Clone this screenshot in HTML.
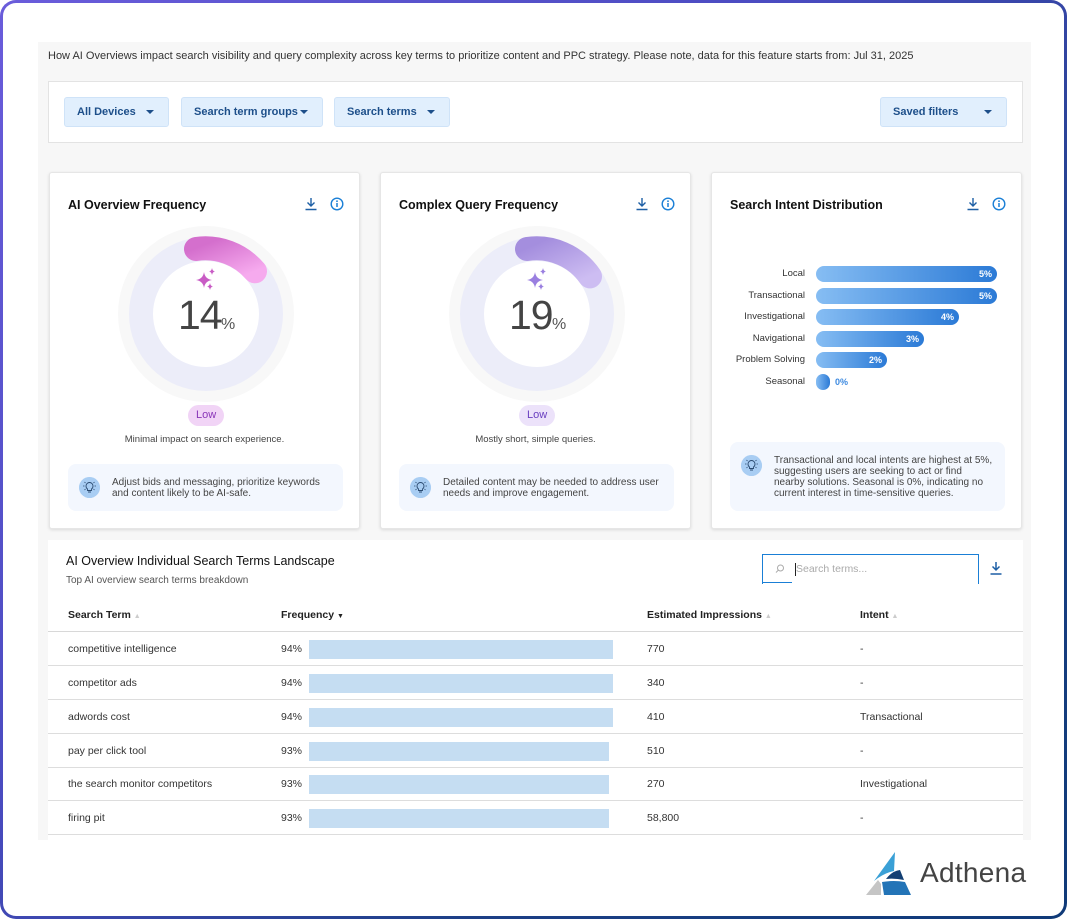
<!DOCTYPE html>
<html><head><meta charset="utf-8"><style>
*{box-sizing:border-box;margin:0;padding:0}
body{width:1067px;height:919px;background:#fff;font-family:"Liberation Sans",sans-serif;color:#333;position:relative;overflow:hidden}
.frame{position:absolute;left:0;top:0;width:1067px;height:919px;border-radius:16px;border:3px solid transparent;background:linear-gradient(#fff,#fff) padding-box,linear-gradient(135deg,#6a5cdb 0%,#4a4bc0 40%,#1c3f86 70%,#0f3a78 100%) border-box}
.abs{position:absolute}
.panel{left:38px;top:42px;width:993px;height:798px;background:#f7f7f7}
.desc{left:48px;top:50px;font-size:11px;color:#333}
.filters{left:48px;top:81px;width:975px;height:62px;background:#fff;border:1px solid #e3e3e3}
.btn{position:absolute;top:15px;height:30px;background:#e1effd;border:1px solid #cfe3f8;border-radius:3px;color:#1d4f8a;font-size:11px;font-weight:bold;line-height:28px;padding-left:12px}
.btn:after{content:"";position:absolute;right:14px;top:12px;border-left:4px solid transparent;border-right:4px solid transparent;border-top:4px solid #1d4f8a}
.card{position:absolute;top:172px;width:311px;height:357px;background:#fff;border:1px solid #e6e6e6;border-radius:3px;box-shadow:0 1px 3px rgba(0,0,0,.12)}
.card h3{position:absolute;left:18px;top:25px;font-size:12.5px;color:#111}
.ic{position:absolute;top:24px}
.pill{position:absolute;top:232px;height:21px;line-height:21px;border-radius:11px;font-size:11px;padding:0 8px}
.sub{position:absolute;top:261px;width:100%;text-align:center;font-size:9.5px;color:#444}
.tip{position:absolute;left:18px;width:275px;background:#f3f7fe;border-radius:8px;font-size:10px;color:#444;line-height:11px}
.bulb{position:absolute;left:11px;width:21px;height:21px;border-radius:50%;background:#a8cdf3}
.tbl{left:48px;top:540px;width:975px;height:300px;background:#fff}
.row{position:absolute;left:48px;width:975px;height:34px;border-bottom:1px solid #ddd;font-size:10.5px;color:#333}
.row span{position:absolute;top:11px}
.bar{position:absolute;top:8px;left:261px;height:19px;background:#c5ddf2}
.il{position:absolute;font-size:9.5px;color:#333}
.ib{position:absolute;left:816px;height:16px;border-radius:8px;background:linear-gradient(90deg,#86bdf3,#2b7ad6);color:#fff;font-size:9px;font-weight:bold;text-align:right;padding-right:5px;line-height:16px}
</style></head><body>
<div class="frame"></div>
<div class="abs panel"></div>
<div class="abs desc">How AI Overviews impact search visibility and query complexity across key terms to prioritize content and PPC strategy. Please note, data for this feature starts from: Jul 31, 2025</div>
<div class="abs filters">
<div class="btn" style="left:15px;width:105px">All Devices</div>
<div class="btn" style="left:132px;width:142px">Search term groups</div>
<div class="btn" style="left:285px;width:116px">Search terms</div>
<div class="btn" style="left:831px;width:127px">Saved filters</div>
</div>

<!-- card 1 -->
<div class="card" style="left:49px">
<h3>AI Overview Frequency</h3>
<svg class="ic" style="left:254px" width="14" height="14" viewBox="0 0 14 14"><path d="M7 1v8M3.5 5.5L7 9l3.5-3.5M1.5 12.5h11" stroke="#1d5fa5" stroke-width="1.4" fill="none"/></svg>
<svg class="ic" style="left:280px" width="14" height="14" viewBox="0 0 14 14"><circle cx="7" cy="7" r="5.8" stroke="#1a7fd6" stroke-width="1.4" fill="none"/><path d="M7 6v4" stroke="#1a7fd6" stroke-width="1.5"/><circle cx="7" cy="4.2" r=".9" fill="#1a7fd6"/></svg>
<svg style="position:absolute;left:67px;top:52px" width="178" height="178" viewBox="-89 -89 178 178">
<defs><linearGradient id="g1" x1="0" y1="0" x2="1" y2="1"><stop offset="0" stop-color="#d46fcd"/><stop offset="1" stop-color="#f6aaee"/></linearGradient></defs>
<circle r="88" fill="#f8f8f8"/><circle r="77" fill="#ecedf9"/><circle r="53" fill="#fff"/>
<path d="M-10 -65 A65 65 0 0 1 49 -42.7" stroke="url(#g1)" stroke-width="24" stroke-linecap="round" fill="none"/>
<path d="M-2 -42 Q-1 -35 6 -34 Q-1 -33 -2 -26 Q-3 -33 -10 -34 Q-3 -35 -2 -42Z M6 -46 Q6.5 -43 9 -42.5 Q6.5 -42 6 -39 Q5.5 -42 3 -42.5 Q5.5 -43 6 -46Z M4 -31 Q4.5 -28 7 -27.5 Q4.5 -27 4 -24 Q3.5 -27 1 -27.5 Q3.5 -28 4 -31Z" fill="#c95cc5"/>
<text x="-28" y="15" font-family="Liberation Sans" font-size="41" fill="#444" letter-spacing="-1">14</text><text x="15" y="15" font-family="Liberation Sans" font-size="16" fill="#555">%</text>
</svg>
<div class="pill" style="left:138px;background:#f1d4f6;color:#8a35b8">Low</div>
<div class="sub">Minimal impact on search experience.</div>
<div class="tip" style="top:291px;height:47px;padding:13px 10px 0 44px"><svg class="bulb" style="top:13px" viewBox="0 0 21 21"><circle cx="10.5" cy="10.5" r="10.5" fill="#a8cdf3"/><path d="M8.5 13.5v-1.5Q7 11 7 9a3.5 3.5 0 0 1 7 0q0 2-1.5 3v1.5Z M9 15h3" stroke="#2a4a70" stroke-width=".9" fill="none"/><path d="M4 9h1.5M15.5 9H17M5.5 5l1 1M15.5 5l-1 1M5.5 13l1-1M15.5 13l-1-1" stroke="#2a4a70" stroke-width=".8"/></svg>Adjust bids and messaging, prioritize keywords and content likely to be AI-safe.</div>
</div>

<!-- card 2 -->
<div class="card" style="left:380px">
<h3>Complex Query Frequency</h3>
<svg class="ic" style="left:254px" width="14" height="14" viewBox="0 0 14 14"><path d="M7 1v8M3.5 5.5L7 9l3.5-3.5M1.5 12.5h11" stroke="#1d5fa5" stroke-width="1.4" fill="none"/></svg>
<svg class="ic" style="left:280px" width="14" height="14" viewBox="0 0 14 14"><circle cx="7" cy="7" r="5.8" stroke="#1a7fd6" stroke-width="1.4" fill="none"/><path d="M7 6v4" stroke="#1a7fd6" stroke-width="1.5"/><circle cx="7" cy="4.2" r=".9" fill="#1a7fd6"/></svg>
<svg style="position:absolute;left:67px;top:52px" width="178" height="178" viewBox="-89 -89 178 178">
<defs><linearGradient id="g2" x1="0" y1="0" x2="1" y2="1"><stop offset="0" stop-color="#a48ede"/><stop offset="1" stop-color="#cdbdf2"/></linearGradient></defs>
<circle r="88" fill="#f8f8f8"/><circle r="77" fill="#ecedf9"/><circle r="53" fill="#fff"/>
<path d="M-10 -65 A65 65 0 0 1 53 -37.6" stroke="url(#g2)" stroke-width="24" stroke-linecap="round" fill="none"/>
<path d="M-2 -42 Q-1 -35 6 -34 Q-1 -33 -2 -26 Q-3 -33 -10 -34 Q-3 -35 -2 -42Z M6 -46 Q6.5 -43 9 -42.5 Q6.5 -42 6 -39 Q5.5 -42 3 -42.5 Q5.5 -43 6 -46Z M4 -31 Q4.5 -28 7 -27.5 Q4.5 -27 4 -24 Q3.5 -27 1 -27.5 Q3.5 -28 4 -31Z" fill="#9a7fe0"/>
<text x="-28" y="15" font-family="Liberation Sans" font-size="41" fill="#444" letter-spacing="-1">19</text><text x="15" y="15" font-family="Liberation Sans" font-size="16" fill="#555">%</text>
</svg>
<div class="pill" style="left:138px;background:#ece2fa;color:#6a3fc0">Low</div>
<div class="sub">Mostly short, simple queries.</div>
<div class="tip" style="top:291px;height:47px;padding:13px 10px 0 44px"><svg class="bulb" style="top:13px" viewBox="0 0 21 21"><circle cx="10.5" cy="10.5" r="10.5" fill="#a8cdf3"/><path d="M8.5 13.5v-1.5Q7 11 7 9a3.5 3.5 0 0 1 7 0q0 2-1.5 3v1.5Z M9 15h3" stroke="#2a4a70" stroke-width=".9" fill="none"/><path d="M4 9h1.5M15.5 9H17M5.5 5l1 1M15.5 5l-1 1M5.5 13l1-1M15.5 13l-1-1" stroke="#2a4a70" stroke-width=".8"/></svg>Detailed content may be needed to address user needs and improve engagement.</div>
</div>

<!-- card 3 -->
<div class="card" style="left:711px">
<h3>Search Intent Distribution</h3>
<svg class="ic" style="left:254px" width="14" height="14" viewBox="0 0 14 14"><path d="M7 1v8M3.5 5.5L7 9l3.5-3.5M1.5 12.5h11" stroke="#1d5fa5" stroke-width="1.4" fill="none"/></svg>
<svg class="ic" style="left:280px" width="14" height="14" viewBox="0 0 14 14"><circle cx="7" cy="7" r="5.8" stroke="#1a7fd6" stroke-width="1.4" fill="none"/><path d="M7 6v4" stroke="#1a7fd6" stroke-width="1.5"/><circle cx="7" cy="4.2" r=".9" fill="#1a7fd6"/></svg>
<div class="tip" style="top:269px;height:69px;padding:13px 10px 0 44px"><svg class="bulb" style="top:13px" viewBox="0 0 21 21"><circle cx="10.5" cy="10.5" r="10.5" fill="#a8cdf3"/><path d="M8.5 13.5v-1.5Q7 11 7 9a3.5 3.5 0 0 1 7 0q0 2-1.5 3v1.5Z M9 15h3" stroke="#2a4a70" stroke-width=".9" fill="none"/><path d="M4 9h1.5M15.5 9H17M5.5 5l1 1M15.5 5l-1 1M5.5 13l1-1M15.5 13l-1-1" stroke="#2a4a70" stroke-width=".8"/></svg>Transactional and local intents are highest at 5%, suggesting users are seeking to act or find nearby solutions. Seasonal is 0%, indicating no current interest in time-sensitive queries.</div>
</div>
<div class="il" style="top:268px;left:0;right:262px;text-align:right">Local</div>
<div class="il" style="top:290px;left:0;right:262px;text-align:right">Transactional</div>
<div class="il" style="top:311px;left:0;right:262px;text-align:right">Investigational</div>
<div class="il" style="top:333px;left:0;right:262px;text-align:right">Navigational</div>
<div class="il" style="top:354px;left:0;right:262px;text-align:right">Problem Solving</div>
<div class="il" style="top:376px;left:0;right:262px;text-align:right">Seasonal</div>
<div class="ib" style="top:266px;width:181px">5%</div>
<div class="ib" style="top:288px;width:181px">5%</div>
<div class="ib" style="top:309px;width:143px">4%</div>
<div class="ib" style="top:331px;width:108px">3%</div>
<div class="ib" style="top:352px;width:71px">2%</div>
<div class="ib" style="top:374px;width:14px"></div>
<div class="abs" style="left:835px;top:377px;font-size:9px;font-weight:bold;color:#3d8ae0">0%</div>

<!-- table -->
<div class="abs tbl"></div>
<div class="abs" style="left:66px;top:554px;font-size:12.5px;color:#111">AI Overview Individual Search Terms Landscape</div>
<div class="abs" style="left:66px;top:575px;font-size:10px;color:#555">Top AI overview search terms breakdown</div>
<div class="abs" style="left:762px;top:554px;width:217px;height:30px;border:1px solid #1a7fd6;border-bottom:none;background:#fff"></div>
<div class="abs" style="left:762px;top:582px;width:30px;height:1px;background:#1a7fd6"></div>
<svg class="abs" style="left:775px;top:564px" width="10" height="10" viewBox="0 0 10 10"><circle cx="5.5" cy="4" r="3" stroke="#aaa" fill="none"/><path d="M3.3 6.2L1 8.5" stroke="#aaa"/></svg>
<div class="abs" style="left:795px;top:563px;width:1px;height:13px;background:#222"></div>
<div class="abs" style="left:796px;top:563px;font-size:10.5px;color:#aaa">Search terms...</div>
<svg class="abs" style="left:989px;top:561px" width="14" height="15" viewBox="0 0 14 15"><path d="M7 1v8M3.5 5.5L7 9l3.5-3.5M1.5 13h11" stroke="#1d5fa5" stroke-width="1.5" fill="none"/></svg>
<div class="row" style="top:598px;font-weight:bold;color:#222;border-bottom:1.5px solid #d8d8d8">
<span style="left:20px">Search Term <b style="color:#ccc;font-size:7px">▲</b></span><span style="left:233px">Frequency <b style="font-size:7px">▼</b></span><span style="left:599px">Estimated Impressions <b style="color:#ccc;font-size:7px">▲</b></span><span style="left:812px">Intent <b style="color:#ccc;font-size:7px">▲</b></span></div>
<div class="row" style="top:632px"><span style="left:20px">competitive intelligence</span><span style="left:233px">94%</span><div class="bar" style="width:304px"></div><span style="left:599px">770</span><span style="left:812px">-</span></div>
<div class="row" style="top:666px"><span style="left:20px">competitor ads</span><span style="left:233px">94%</span><div class="bar" style="width:304px"></div><span style="left:599px">340</span><span style="left:812px">-</span></div>
<div class="row" style="top:700px"><span style="left:20px">adwords cost</span><span style="left:233px">94%</span><div class="bar" style="width:304px"></div><span style="left:599px">410</span><span style="left:812px">Transactional</span></div>
<div class="row" style="top:734px"><span style="left:20px">pay per click tool</span><span style="left:233px">93%</span><div class="bar" style="width:300px"></div><span style="left:599px">510</span><span style="left:812px">-</span></div>
<div class="row" style="top:767px"><span style="left:20px">the search monitor competitors</span><span style="left:233px">93%</span><div class="bar" style="width:300px"></div><span style="left:599px">270</span><span style="left:812px">Investigational</span></div>
<div class="row" style="top:801px"><span style="left:20px">firing pit</span><span style="left:233px">93%</span><div class="bar" style="width:300px"></div><span style="left:599px">58,800</span><span style="left:812px">-</span></div>

<!-- logo -->
<svg class="abs" style="left:864px;top:851px" width="48" height="45" viewBox="0 0 48 45">
<path d="M31 1L10 30 Q20 22 30 20Z" fill="#3aa0d6"/>
<path d="M22 28 Q28 20 36 19 L40 29 Q30 27 22 28Z" fill="#123f73"/>
<path d="M18 31 Q30 29 41 31 L47 44 L20 44Z" fill="#2374b7"/>
<path d="M2 44 L14 29 L17 33 L17 44Z" fill="#c5c5c5"/>
</svg>
<div class="abs" style="left:920px;top:857px;font-size:28px;color:#444;letter-spacing:.3px">Adthena</div>
</body></html>
